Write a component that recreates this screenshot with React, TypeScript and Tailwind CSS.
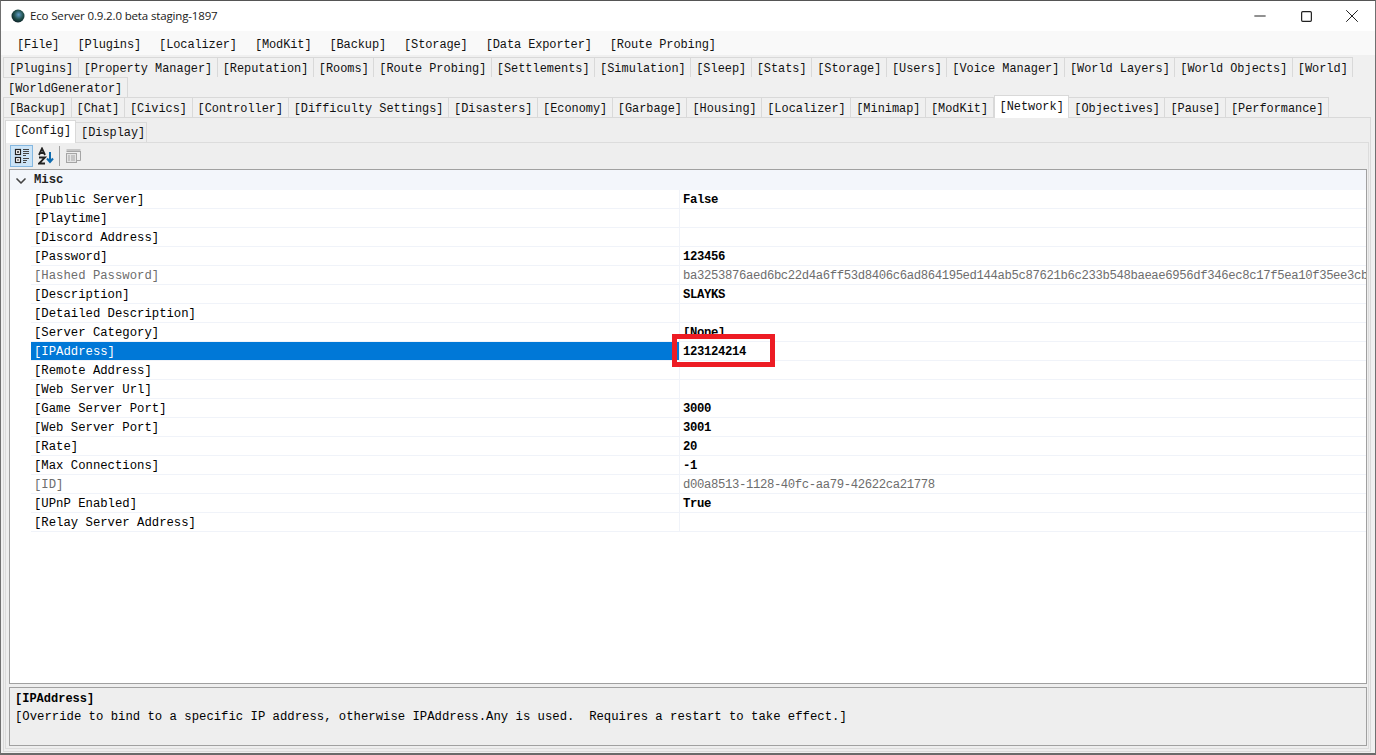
import { Minus, Square, X, ChevronDown } from 'lucide-react';

const menu = ['[File]', '[Plugins]', '[Localizer]', '[ModKit]', '[Backup]', '[Storage]', '[Data Exporter]', '[Route Probing]'];

const tabsTop = ['[Plugins]', '[Property Manager]', '[Reputation]', '[Rooms]', '[Route Probing]', '[Settlements]', '[Simulation]', '[Sleep]', '[Stats]', '[Storage]', '[Users]', '[Voice Manager]', '[World Layers]', '[World Objects]', '[World]', '[WorldGenerator]'];

const tabsBottom = ['[Backup]', '[Chat]', '[Civics]', '[Controller]', '[Difficulty Settings]', '[Disasters]', '[Economy]', '[Garbage]', '[Housing]', '[Localizer]', '[Minimap]', '[ModKit]', '[Network]', '[Objectives]', '[Pause]', '[Performance]'];

interface Row {
  label: string;
  value?: string;
  muted?: boolean;
  selected?: boolean;
}

const rows: Row[] = [
  { label: '[Public Server]', value: 'False' },
  { label: '[Playtime]' },
  { label: '[Discord Address]' },
  { label: '[Password]', value: '123456' },
  { label: '[Hashed Password]', value: 'ba3253876aed6bc22d4a6ff53d8406c6ad864195ed144ab5c87621b6c233b548baeae6956df346ec8c17f5ea10f35ee3cb', muted: true },
  { label: '[Description]', value: 'SLAYKS' },
  { label: '[Detailed Description]' },
  { label: '[Server Category]', value: '[None]' },
  { label: '[IPAddress]', value: '123124214', selected: true },
  { label: '[Remote Address]' },
  { label: '[Web Server Url]' },
  { label: '[Game Server Port]', value: '3000' },
  { label: '[Web Server Port]', value: '3001' },
  { label: '[Rate]', value: '20' },
  { label: '[Max Connections]', value: '-1' },
  { label: '[ID]', value: 'd00a8513-1128-40fc-aa79-42622ca21778', muted: true },
  { label: '[UPnP Enabled]', value: 'True' },
  { label: '[Relay Server Address]' },
];

function Tab({ label, active }: { label: string; active?: boolean }) {
  if (active) {
    return (
      <div className="relative z-10 -mt-[2px] -mb-[1px] flex h-[23px] items-start border border-b-0 border-[#d9d9d9] bg-white pr-[4.5px] pl-[5px] pt-[3px] whitespace-pre">
        {label}
      </div>
    );
  }
  return (
    <div className="flex h-[20px] items-center border-t border-r border-[#d9d9d9] pt-[4px] pr-[4.5px] pl-[5px] whitespace-pre first:border-l">
      {label}
    </div>
  );
}

function Logo() {
  return (
    <svg width="14" height="14" viewBox="0 0 14 14">
      <defs>
        <radialGradient id="globe" cx="0.55" cy="0.4" r="0.65">
          <stop offset="0" stopColor="#5f9ac4" />
          <stop offset="0.55" stopColor="#1f4f4a" />
          <stop offset="1" stopColor="#0a1a22" />
        </radialGradient>
      </defs>
      <circle cx="7" cy="7" r="6.5" fill="url(#globe)" />
    </svg>
  );
}

function CategorizedIcon() {
  return (
    <svg width="16" height="16" viewBox="0 0 16 16" fill="none">
      <rect x="1.5" y="1.5" width="5" height="5" stroke="#222" strokeWidth="1.2" fill="#fff" />
      <rect x="1.5" y="9.5" width="5" height="5" stroke="#222" strokeWidth="1.2" fill="#fff" />
      <path d="M3 4h2M4 3v2M3 12h2" stroke="#222" />
      <path d="M9 1.5h6M9 3.5h6M9 5.5h6M9 7.5h3M9 10.5h6M9 12.5h4M9 14.5h3" stroke="#444" />
    </svg>
  );
}

function SortIcon() {
  return (
    <svg width="16" height="18" viewBox="0 0 16 18" fill="none">
      <path d="M1 8 4 1.5 7 8M2 6h4" stroke="#222" strokeWidth="1.8" />
      <path d="M1 10.5h6l-6 6h6" stroke="#222" strokeWidth="1.8" />
      <path d="M12 5v10M9 11.5l3 3.5 3-3.5" stroke="#0f6cb0" strokeWidth="2" />
    </svg>
  );
}

function PagesIcon() {
  return (
    <svg width="15" height="14" viewBox="0 0 15 14" fill="none">
      <path d="M.5 2.5h14M14.5 2v9.5H11" stroke="#a5a5a5" />
      <rect x=".5" y="4.5" width="10" height="9" stroke="#a5a5a5" fill="#e4e4e4" />
      <path d="M2 7h2M5 7h4M2 9h2M5 9h4M2 11h2M5 11h4" stroke="#a5a5a5" />
      <path d="M.5 1h14" stroke="#9a9a9a" />
    </svg>
  );
}

export default function App() {
  return (
    <div className="flex h-[755px] w-[1376px] flex-col overflow-hidden border-x border-t border-b-2 border-x-[#707070] border-t-[#555555] border-b-[#6a6a6a] bg-[#f0f0f0] text-[11.9px] text-[#111] font-['Liberation_Mono',monospace]">
      <div className="flex h-[30px] shrink-0 items-center bg-white pl-[10px] text-[11.5px] text-[#1a1a1a] font-['Open_Sans',sans-serif]">
        <Logo />
        <span className="ml-[5px] tracking-[-0.15px]">Eco Server 0.9.2.0 beta staging-1897</span>
        <div className="ml-auto flex text-[#222]">
          <div className="flex h-[30px] w-[46px] items-center justify-center"><Minus size={18} strokeWidth={1} absoluteStrokeWidth /></div>
          <div className="flex h-[30px] w-[46px] items-center justify-center"><Square size={13} strokeWidth={1.2} absoluteStrokeWidth /></div>
          <div className="flex h-[30px] w-[46px] items-center justify-center"><X size={22} strokeWidth={1} absoluteStrokeWidth /></div>
        </div>
      </div>

      <div className="flex h-[24px] shrink-0 items-center bg-[#f9f9f9] pt-[4px] pl-[7px] text-[12px] tracking-[-0.13px]">
        {menu.map((m) => (
          <div key={m} className="px-[9px] whitespace-pre">{m}</div>
        ))}
      </div>

      <div className="mt-[2px] flex w-[1360px] shrink-0 flex-wrap pl-[2px]">
        {tabsTop.map((t) => (
          <Tab key={t} label={t} />
        ))}
      </div>
      <div className="flex shrink-0 pl-[2px]">
        {tabsBottom.map((t) => (
          <Tab key={t} label={t} active={t === '[Network]'} />
        ))}
      </div>

      <div className="ml-[2px] mr-[4px] flex min-h-0 flex-1 flex-col border border-[#d9d9d9] bg-[#eeeeee] px-[1px] pt-[1px]">
        <div className="flex h-[23px] shrink-0 items-end">
          <div className="relative z-10 -mb-[1px] flex h-[23px] w-[71px] items-start border border-b-0 border-[#d9d9d9] bg-white pl-[8px] pt-[2px] whitespace-pre">[Config]</div>
          <div className="flex h-[20px] w-[71px] items-center border-t border-r border-[#d9d9d9] pt-[2px] pl-[5px] whitespace-pre">[Display]</div>
        </div>

        <div className="mb-[2px] flex min-h-0 flex-1 flex-col border border-[#dcdcdc] pr-[1px] pb-[2px] pl-[3px]">
          <div className="flex h-[25px] shrink-0 items-center gap-[1px] pl-[1px]">
            <div className="flex h-[22px] w-[23px] items-center justify-center border border-[#84b7e0] bg-[#cce4f7]"><CategorizedIcon /></div>
            <div className="flex h-[22px] w-[23px] items-center justify-center"><SortIcon /></div>
            <div className="mx-[1px] h-[20px] w-px bg-[#a0a0a0]" />
            <div className="flex h-[22px] w-[23px] items-center justify-center"><PagesIcon /></div>
          </div>

          <div className="relative mt-[1px] min-h-0 flex-1 overflow-hidden border border-[#a0a0a0] bg-white text-[12.28px] text-black">
            <div className="flex h-[20px] items-center bg-[#f3f6fb] pt-[1px] font-bold">
              <div className="flex w-[21px] justify-center text-[#444]"><ChevronDown size={16} strokeWidth={2.5} /></div>
              <span className="ml-[3px] text-[#222]">Misc</span>
            </div>
            {rows.map((r) => (
              <div key={r.label} className="ml-[21px] flex h-[19px] border-b border-[#f0f3f9] whitespace-pre">
                <div className={`flex w-[649px] shrink-0 items-center border-r border-[#f0f3f9] pt-[2px] pl-[3px] ${r.selected ? 'bg-[#0078d7] text-white' : r.muted ? 'text-[#6d6d6d]' : ''}`}>
                  {r.label}
                </div>
                <div className={`flex items-center pt-[2px] pl-[3px] tracking-[-0.37px] ${r.muted ? 'text-[#6d6d6d]' : 'font-bold'}`}>{r.value}</div>
              </div>
            ))}
            {/* red annotation box around the edited value */}
            <div className="absolute top-[164px] left-[662px] h-[33px] w-[103px] border-[5px] border-[#ed1c24]" />
          </div>

          <div className="mt-[3px] h-[59px] shrink-0 border border-[#a0a0a0] bg-[#eeeeee] pt-[2px] pl-[5px] text-[12.28px] whitespace-pre text-black">
            <div className="text-[12px] font-bold leading-[18px]">[IPAddress]</div>
            <div className="leading-[18px]">[Override to bind to a specific IP address, otherwise IPAddress.Any is used.  Requires a restart to take effect.]</div>
          </div>
        </div>
      </div>
      <div className="h-[1px] shrink-0" />
    </div>
  );
}
